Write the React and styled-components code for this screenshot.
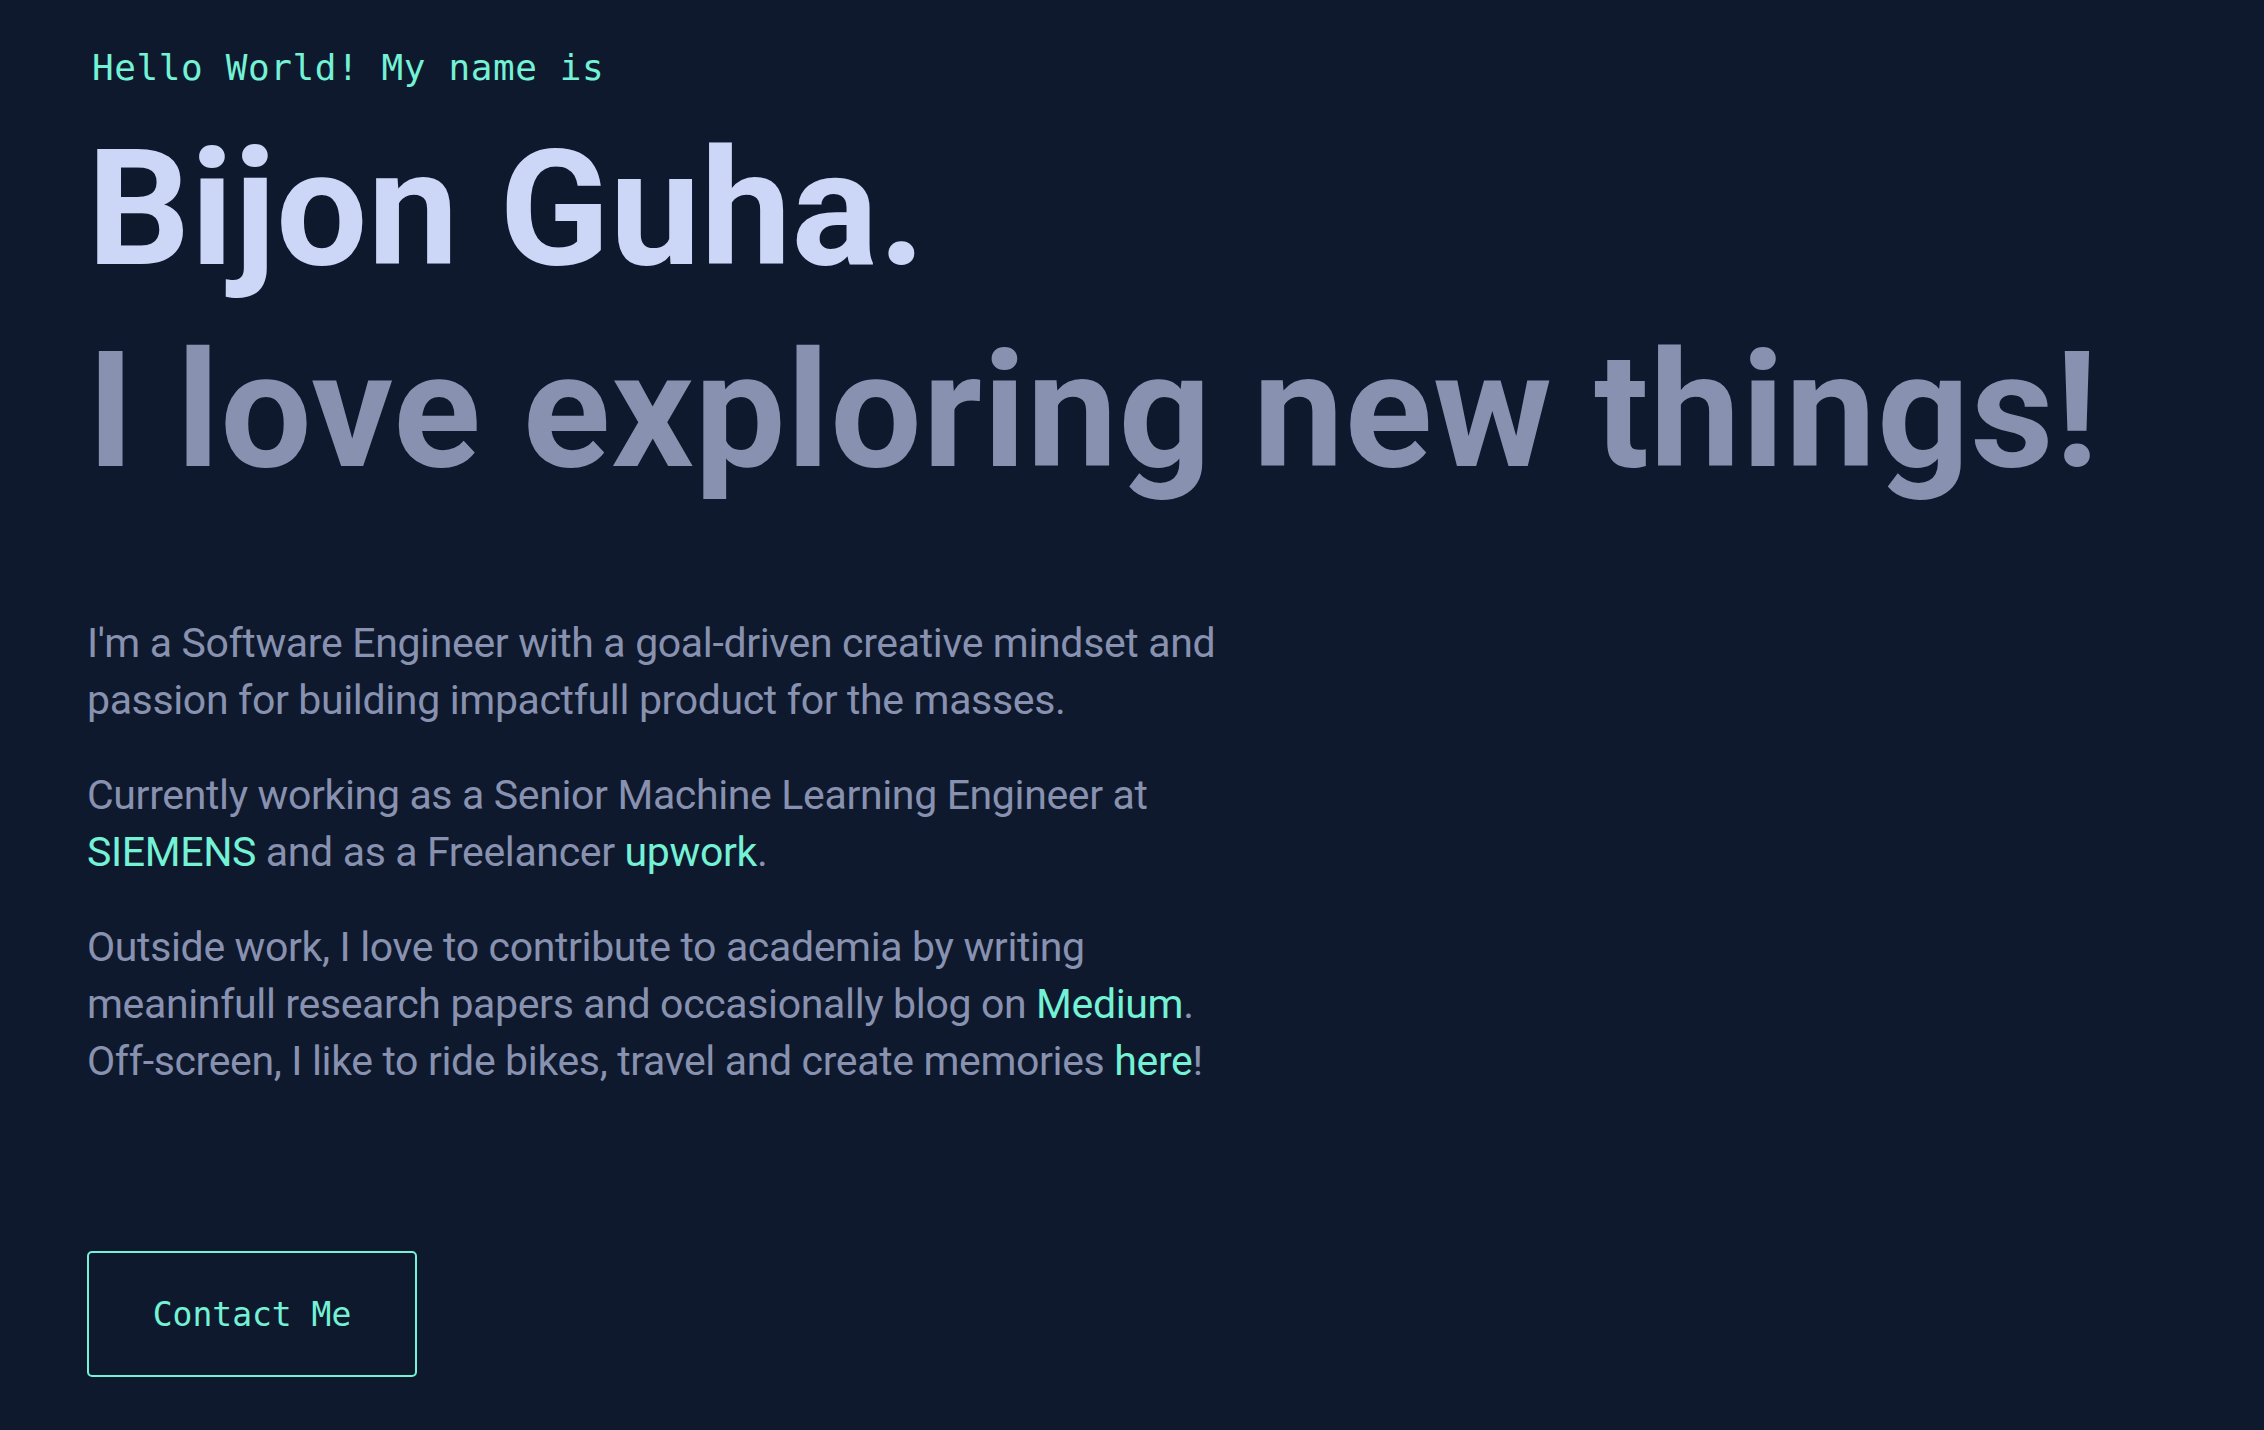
import React from "react";
import styled, { createGlobalStyle } from "styled-components";

const GlobalStyle = createGlobalStyle`
  html, body {
    margin: 0;
    padding: 0;
    background-color: #0f192d;
  }
  * {
    box-sizing: border-box;
  }
`;

/* ---------------- HERO ---------------- */

const Hero = styled.section`
  min-height: 100vh;
  background-color: #0f192d;
  padding: 48px 87px 52px;
  display: flex;
  flex-direction: column;
  align-items: flex-start;
`;

const Overline = styled.h1`
  margin: 0 0 0 5px;
  font-family: "DejaVu Sans Mono", "Liberation Mono", monospace;
  font-size: 36px;
  font-weight: 400;
  line-height: 40px;
  letter-spacing: 0.6px;
  color: #74f2d6;
`;

const BigHeading = styled.h2`
  margin: ${(p) => (p.$muted ? "24px" : "32px")} 0 0;
  font-family: Roboto, "Liberation Sans", sans-serif;
  font-size: 162px;
  font-weight: 700;
  line-height: 178px;
  letter-spacing: ${(p) => (p.$muted ? "0.9px" : "0.2px")};
  color: ${(p) => (p.$muted ? "#8892b0" : "#ccd6f6")};
  white-space: nowrap;
`;

const About = styled.div`
  margin-top: 115px;
  max-width: 1160px;
  display: flex;
  flex-direction: column;
  gap: 38px;
`;

const Paragraph = styled.p`
  margin: 0;
  font-family: Roboto, "Liberation Sans", sans-serif;
  font-size: 41px;
  font-weight: 400;
  line-height: 57px;
  letter-spacing: -0.35px;
  color: #8892b0;
`;

const Highlight = styled.a`
  color: #74f2d6;
  text-decoration: none;
  cursor: pointer;

  &:hover {
    text-decoration: underline;
  }
`;

const ContactButton = styled.a`
  margin-top: 161px;
  width: 330px;
  height: 126px;
  display: flex;
  align-items: center;
  justify-content: center;
  border: 2px solid #74f2d6;
  border-radius: 5px;
  font-family: "DejaVu Sans Mono", "Liberation Mono", monospace;
  font-size: 33px;
  color: #74f2d6;
  text-decoration: none;
  cursor: pointer;

  &:hover {
    background-color: rgba(116, 242, 214, 0.1);
  }
`;

/* ---------------- COMPONENT ---------------- */

const App = () => {
  return (
    <>
      <GlobalStyle />
      <Hero>
        <Overline>Hello World! My name is</Overline>
        <BigHeading>Bijon Guha.</BigHeading>
        <BigHeading $muted>I love exploring new things!</BigHeading>

        <About>
          <Paragraph>
            I'm a Software Engineer with a goal-driven creative mindset and
            passion for building impactfull product for the masses.
          </Paragraph>
          <Paragraph>
            Currently working as a Senior Machine Learning Engineer at{" "}
            <Highlight>SIEMENS</Highlight> and as a Freelancer{" "}
            <Highlight>upwork</Highlight>.
          </Paragraph>
          <Paragraph>
            Outside work, I love to contribute to academia by writing
            meaninfull research papers and occasionally blog on{" "}
            <Highlight>Medium</Highlight>. Off-screen, I like to ride bikes,
            travel and create memories <Highlight>here</Highlight>!
          </Paragraph>
        </About>

        <ContactButton>Contact Me</ContactButton>
      </Hero>
    </>
  );
};

export default App;
